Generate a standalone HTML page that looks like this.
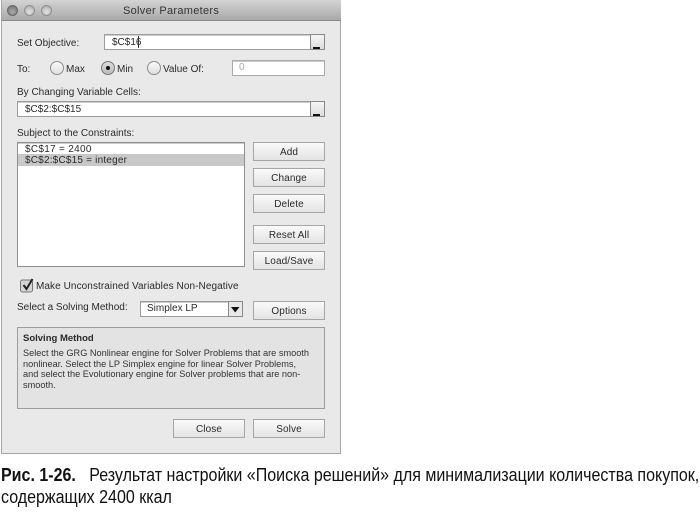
<!DOCTYPE html>
<html><head><meta charset="utf-8">
<style>
html,body{margin:0;padding:0;background:#fff;}
body{width:700px;height:512px;position:relative;overflow:hidden;font-family:"Liberation Sans",sans-serif;font-size:10px;color:#2a2a2a;}
#w{position:absolute;left:0;top:0;width:700px;height:512px;filter:blur(.35px);}
.a{position:absolute;white-space:nowrap;line-height:12px;}
.win{position:absolute;left:1px;top:0;width:340px;height:454px;box-sizing:border-box;background:#e9e9e9;border:1px solid #a5a5a5;border-top:0;}
.tb{position:absolute;left:0;top:0;width:338px;height:20px;background:linear-gradient(#d4d4d4,#a9a9a9);border-bottom:1px solid #8a8a8a;}
.dot{position:absolute;top:5px;width:11px;height:11px;border-radius:50%;box-sizing:border-box;}
.in{position:absolute;box-sizing:border-box;background:#fff;border:1px solid #9d9d9d;box-shadow:inset 0 1px 0 #ccc;}
.btn{position:absolute;box-sizing:border-box;background:linear-gradient(#fafafa,#e3e3e3);border:1px solid #a6a6a6;text-align:center;font-size:10px;color:#2a2a2a;letter-spacing:.1px;}
.rb{position:absolute;top:61px;width:14px;height:14px;border-radius:50%;box-sizing:border-box;border:1px solid #8d8d8d;background:linear-gradient(#f8f8f8,#e0e0e0);}
.pick{position:absolute;box-sizing:border-box;width:15px;background:linear-gradient(#f5f5f5,#dcdcdc);border:1px solid #888;}
.pick i{position:absolute;left:2px;bottom:0;width:7px;height:2px;background:#111;}
</style></head><body>
<div id="w">
<div class="win"></div>
<div class="tb" style="left:2px;width:339px"></div>
<div class="dot" style="left:7px;background:radial-gradient(circle at 50% 65%,#aaa,#6e6e6e);border:1px solid #666"></div>
<div class="dot" style="left:24px;background:radial-gradient(circle at 50% 65%,#e4e4e4,#a5a5a5);border:1px solid #8f8f8f"></div>
<div class="dot" style="left:41px;background:radial-gradient(circle at 50% 65%,#e4e4e4,#a5a5a5);border:1px solid #8f8f8f"></div>
<div class="a" style="left:123px;top:5px;font-size:11px;color:#333;letter-spacing:.3px">Solver Parameters</div>

<div class="a" style="left:17px;top:38px;font-size:10px">Set Objective:</div>
<div class="in" style="left:104px;top:34px;width:207px;height:16px"></div>
<div class="a" style="left:112px;top:37px;font-size:10px">$C$16</div>
<div style="position:absolute;left:138px;top:36px;width:1px;height:12px;background:#333"></div>
<div class="pick" style="left:310px;top:34px;height:16px"><i></i></div>

<div class="a" style="left:17px;top:64px">To:</div>
<div class="rb" style="left:50px"></div>
<div class="a" style="left:66px;top:64px">Max</div>
<div class="rb" style="left:101px;background:linear-gradient(#ddd,#bbb);border-color:#777"></div>
<div style="position:absolute;left:106px;top:66px;width:4px;height:4px;border-radius:50%;background:#111"></div>
<div class="a" style="left:117px;top:64px">Min</div>
<div class="rb" style="left:147px"></div>
<div class="a" style="left:163px;top:64px">Value Of:</div>
<div class="in" style="left:232px;top:60px;width:93px;height:16px;border-color:#aaa"></div>
<div class="a" style="left:239px;top:62px;color:#aaa">0</div>

<div class="a" style="left:17px;top:87px">By Changing Variable Cells:</div>
<div class="in" style="left:17px;top:101px;width:294px;height:16px"></div>
<div class="a" style="left:25px;top:104px">$C$2:$C$15</div>
<div class="pick" style="left:310px;top:101px;height:16px"><i></i></div>

<div class="a" style="left:17px;top:128px">Subject to the Constraints:</div>
<div class="in" style="left:17px;top:142px;width:228px;height:125px;border-color:#8f8f8f"></div>
<div style="position:absolute;left:18px;top:154px;width:226px;height:12px;background:#c8c8c8"></div>
<div class="a" style="left:25px;top:144px;font-size:10px;letter-spacing:.3px">$C$17 = 2400</div>
<div class="a" style="left:25px;top:155px;font-size:10px;letter-spacing:.2px">$C$2:$C$15 = integer</div>

<div class="btn" style="left:253px;top:142px;width:72px;height:19px;line-height:19px">Add</div>
<div class="btn" style="left:253px;top:168px;width:72px;height:19px;line-height:19px">Change</div>
<div class="btn" style="left:253px;top:194px;width:72px;height:19px;line-height:19px">Delete</div>
<div class="btn" style="left:253px;top:225px;width:72px;height:19px;line-height:19px">Reset All</div>
<div class="btn" style="left:253px;top:251px;width:72px;height:19px;line-height:19px">Load/Save</div>

<svg style="position:absolute;left:20px;top:277px" width="16" height="16" viewBox="0 0 16 16"><rect x="0.5" y="3" width="12" height="12" rx="2" fill="#d5d5d5" stroke="#777"/><path d="M3.5 8 L6.5 12 L12.5 2" fill="none" stroke="#222" stroke-width="2"/></svg>
<div class="a" style="left:36px;top:281px;letter-spacing:.08px">Make Unconstrained Variables Non-Negative</div>

<div class="a" style="left:17px;top:302px">Select a Solving Method:</div>
<div class="in" style="left:140px;top:301px;width:103px;height:16px;border-color:#999"></div>
<div class="a" style="left:147px;top:303px">Simplex LP</div>
<div style="position:absolute;left:228px;top:301px;width:15px;height:16px;box-sizing:border-box;border:1px solid #888;background:#e8e8e8"></div>
<svg style="position:absolute;left:231px;top:307px" width="9" height="6"><path d="M0 0H8.5L4.2 5.5Z" fill="#111"/></svg>
<div class="btn" style="left:253px;top:301px;width:72px;height:19px;line-height:19px">Options</div>

<div style="position:absolute;left:17px;top:327px;width:308px;height:82px;box-sizing:border-box;border:1px solid #9d9d9d;background:#e3e3e3"></div>
<div class="a" style="left:23px;top:333px;font-weight:bold;font-size:9.5px">Solving Method</div>
<div class="a" style="left:23px;top:348px;font-size:9.2px;line-height:10.6px;color:#333">Select the GRG Nonlinear engine for Solver Problems that are smooth<br>nonlinear. Select the LP Simplex engine for linear Solver Problems,<br>and select the Evolutionary engine for Solver problems that are non-<br>smooth.</div>

<div class="btn" style="left:173px;top:419px;width:72px;height:19px;line-height:19px">Close</div>
<div class="btn" style="left:253px;top:419px;width:72px;height:19px;line-height:19px">Solve</div>

<div class="a" style="left:1px;top:465px;font-size:18px;line-height:20px;color:#111;transform:scaleX(.89);transform-origin:0 0"><b>Рис. 1-26.</b>&nbsp;&nbsp; Результат настройки «Поиска решений» для минимализации количества покупок,</div>
<div class="a" style="left:1px;top:487px;font-size:18px;line-height:20px;color:#111;transform:scaleX(.89);transform-origin:0 0">содержащих 2400 ккал</div>
</div>
</body></html>
